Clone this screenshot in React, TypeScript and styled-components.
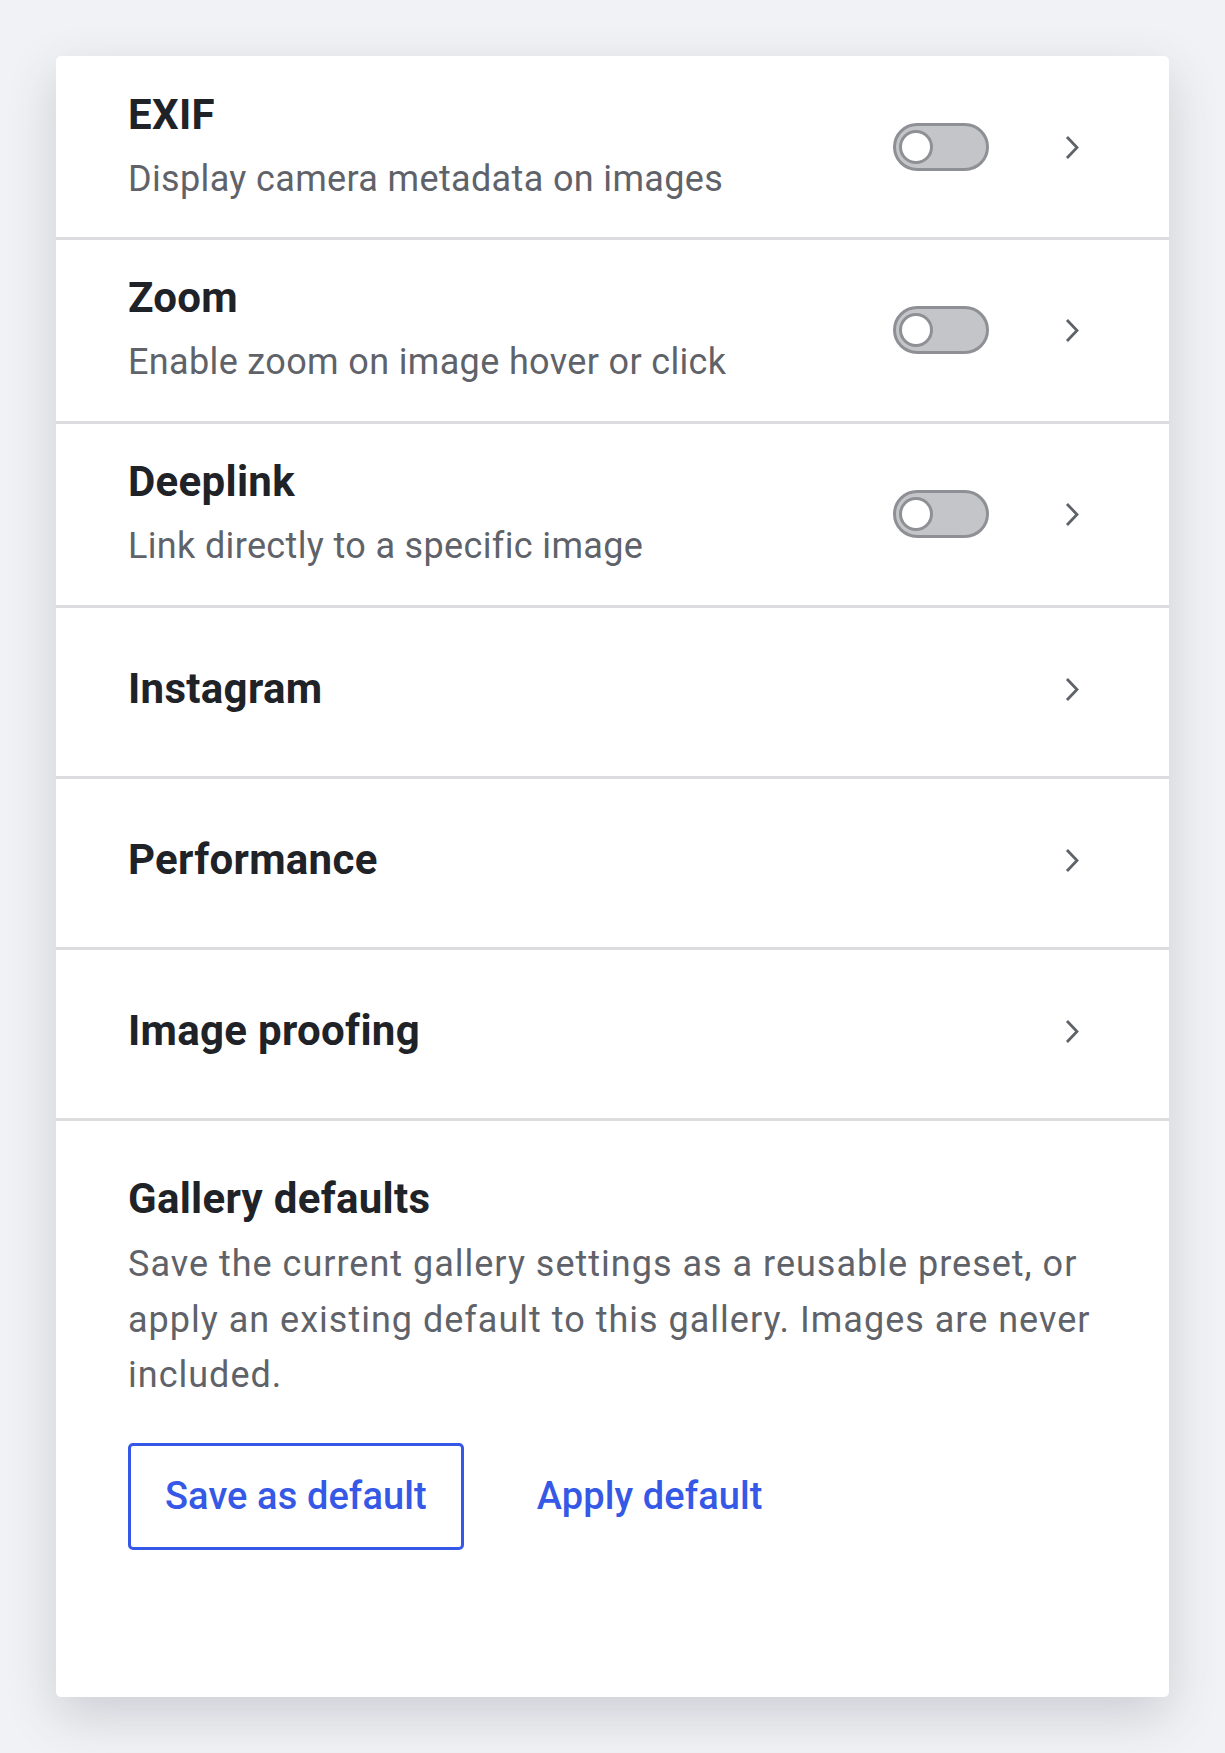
import React from 'react';
import styled, { createGlobalStyle } from 'styled-components';

const GlobalStyle = createGlobalStyle`
  html, body {
    margin: 0;
    padding: 0;
    background: #f0f2f5;
  }
  body {
    font-family: Roboto, "Noto Sans", Arial, sans-serif;
    -webkit-font-smoothing: antialiased;
  }
  * {
    box-sizing: border-box;
  }
`;

type Setting = {
  title: string;
  subtitle?: string;
  toggle?: boolean;
};

const SETTINGS: Setting[] = [
  { title: 'EXIF', subtitle: 'Display camera metadata on images', toggle: true },
  { title: 'Zoom', subtitle: 'Enable zoom on image hover or click', toggle: true },
  { title: 'Deeplink', subtitle: 'Link directly to a specific image', toggle: true },
  { title: 'Instagram' },
  { title: 'Performance' },
  { title: 'Image proofing' },
];

const Chevron = () => (
  <ChevronIcon width="14" height="25" viewBox="0 0 14 25" aria-hidden>
    <polyline points="2,2 12,12.5 2,23" />
  </ChevronIcon>
);

export default function App() {
  return (
    <>
      <GlobalStyle />
      <Page>
        <Card>
          {SETTINGS.map((s) => (
            <Row key={s.title} $compact={!s.subtitle}>
              <Text>
                <Title>{s.title}</Title>
                {s.subtitle && <Subtitle>{s.subtitle}</Subtitle>}
              </Text>
              {s.toggle && (
                <Toggle role="switch" aria-checked={false}>
                  <Knob />
                </Toggle>
              )}
              <Chevron />
            </Row>
          ))}
          <Defaults>
            <Title>Gallery defaults</Title>
            <Description>
              Save the current gallery settings as a reusable preset, or apply an existing default to this
              gallery. Images are never included.
            </Description>
            <Actions>
              <ActionButton $outlined>Save as default</ActionButton>
              <ActionButton>Apply default</ActionButton>
            </Actions>
          </Defaults>
        </Card>
      </Page>
    </>
  );
}

const Page = styled.div`
  padding: 56px;
  min-height: 1753px;
`;

const Card = styled.div`
  background: #ffffff;
  border-radius: 5px;
  box-shadow: 0 18px 50px rgba(60, 64, 82, 0.2);
  overflow: hidden;
`;

const Row = styled.div<{ $compact: boolean }>`
  display: flex;
  align-items: center;
  padding: ${(p) => (p.$compact ? '57px 90px 63px 72px' : '34px 90px 35px 72px')};
  border-bottom: 3px solid #dcdcde;

  &:first-child {
    padding-bottom: 34px;
    padding-top: 35px;
  }
`;

const Text = styled.div`
  flex: 1;
  display: flex;
  flex-direction: column;
  gap: 16px;
  min-width: 0;
`;

const Title = styled.div`
  font-size: 42px;
  line-height: 48px;
  font-weight: 700;
  letter-spacing: 0.3px;
  color: #1f2328;
`;

const Subtitle = styled.div`
  font-size: 36px;
  line-height: 48px;
  font-weight: 400;
  letter-spacing: 0.35px;
  color: #5f6369;
`;

const Toggle = styled.div`
  width: 96px;
  height: 48px;
  margin-right: 76px;
  border: 3px solid #8e9095;
  border-radius: 24px;
  background: #c4c5c9;
  display: flex;
  align-items: center;
  padding-left: 3px;
  flex-shrink: 0;
`;

const Knob = styled.span`
  width: 34px;
  height: 34px;
  border-radius: 50%;
  border: 3px solid #8e9095;
  background: #ffffff;
`;

const ChevronIcon = styled.svg`
  flex-shrink: 0;
  fill: none;
  stroke: #5f6369;
  stroke-width: 2.8;
  stroke-linecap: butt;
  stroke-linejoin: miter;
`;

const Defaults = styled.div`
  padding: 54px 72px 147px 72px;
  display: flex;
  flex-direction: column;
`;

const Description = styled.p`
  margin: 14px 0 0;
  font-size: 36px;
  line-height: 55.5px;
  letter-spacing: 1px;
  color: #5f6369;
`;

const Actions = styled.div`
  display: flex;
  gap: 36px;
  margin-top: 39px;
`;

const ActionButton = styled.button<{ $outlined?: boolean }>`
  height: 107px;
  padding: 0 34px;
  display: inline-flex;
  align-items: center;
  border: 3px solid ${(p) => (p.$outlined ? '#3558e6' : 'transparent')};
  border-radius: 5px;
  background: transparent;
  color: #3558e6;
  font-family: Roboto, "Noto Sans", Arial, sans-serif;
  font-size: 38px;
  font-weight: 500;
  letter-spacing: 0.1px;
  cursor: pointer;
`;
